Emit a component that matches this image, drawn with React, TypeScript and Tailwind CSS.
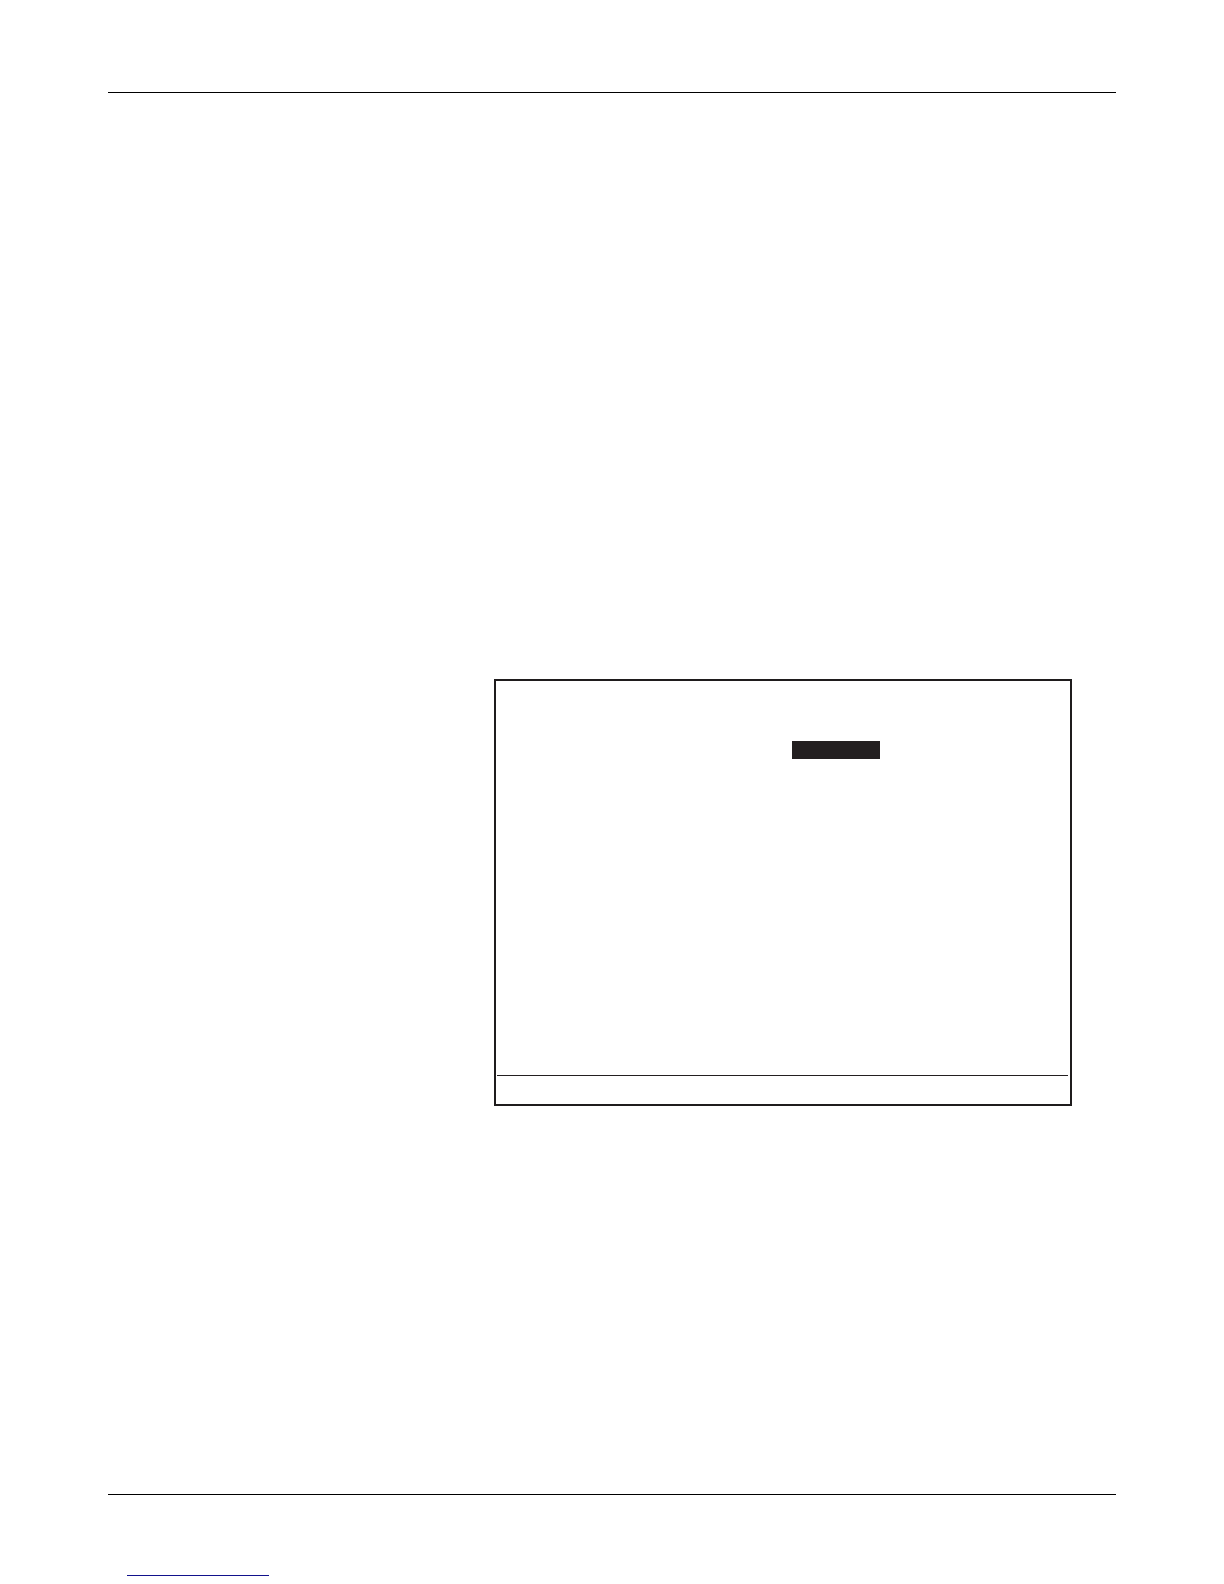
export default function App() {
  return (
    <div className="flex min-h-screen flex-col bg-white px-[108px] pt-[92px] pb-2">
      <header className="border-t border-black" />
      <main className="grow pt-[586px] pr-[44px] pb-[388px] pl-[386px]">
        <section className="border-2 border-[#1f1c1d]">
          <div className="h-[394px] pt-[60px] pl-[296px]">
            <div className="h-[18px] w-[88px] bg-[#231f20]" />
          </div>
          <div className="mr-0.5 ml-px border-t border-[#231f20]" />
          <div className="h-7" />
        </section>
      </main>
      <footer className="border-t border-black pl-[19px]">
        <a
          href="#"
          aria-label="Contents"
          className="block h-[81px] w-[142px] border-b border-[#12128c]"
        />
      </footer>
    </div>
  );
}
